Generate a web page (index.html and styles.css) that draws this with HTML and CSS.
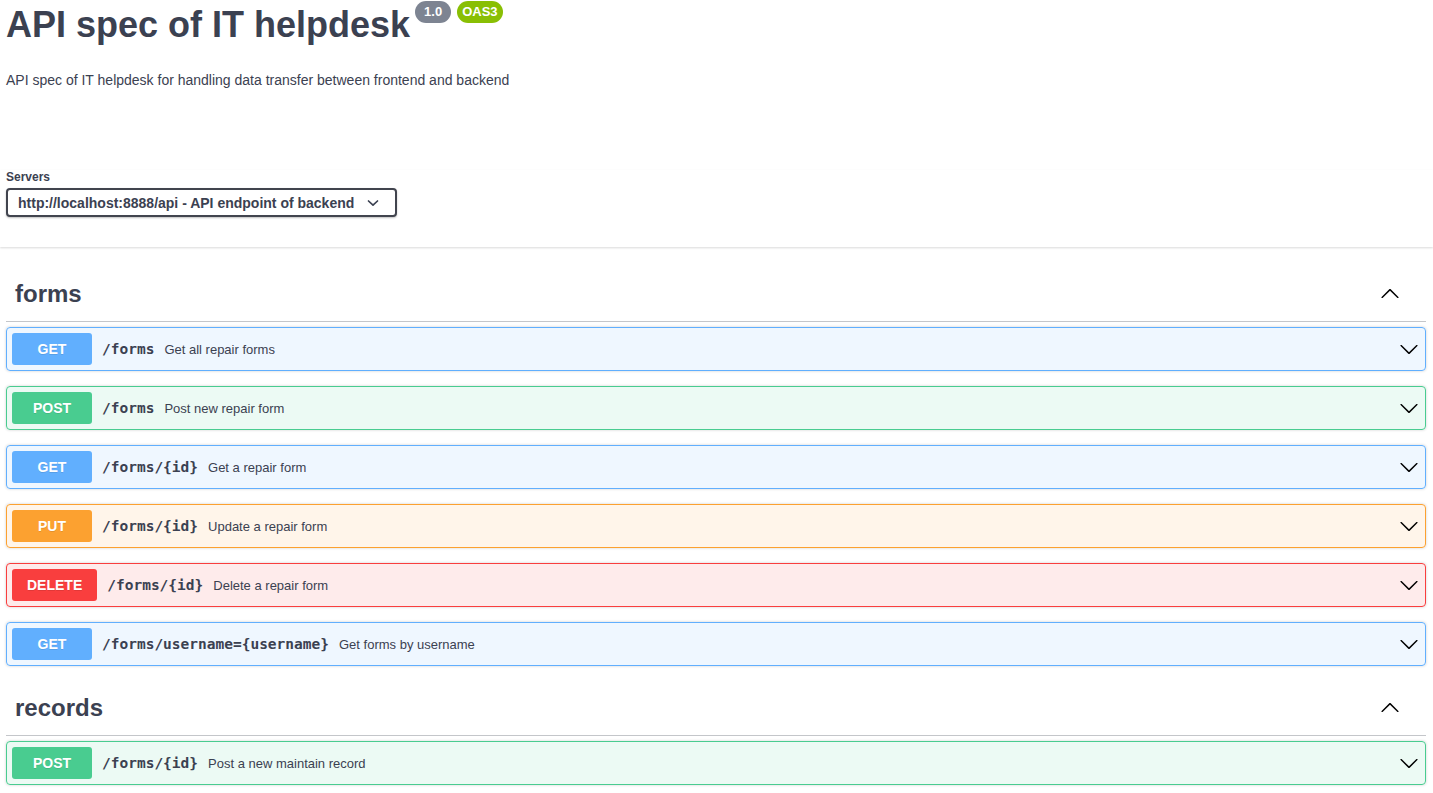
FILE: index.html
```html
<!DOCTYPE html>
<html lang="en">
<head>
<meta charset="utf-8">
<title>API spec of IT helpdesk</title>
<link rel="stylesheet" href="styles.css">
</head>
<body>
<div class="info">
  <h2 class="title">API spec of IT helpdesk<span class="pill pill-version">1.0</span><span class="pill pill-oas">OAS3</span></h2>
  <p class="description">API spec of IT helpdesk for handling data transfer between frontend and backend</p>
</div>
<div class="scheme">
  <div class="servers">
    <label class="servers-label">Servers</label>
    <div class="select">
      <span>http://localhost:8888/api - API endpoint of backend</span>
      <svg class="select-arrow" width="12" height="12" viewBox="0 0 12 12"><polyline points="1.5,4 6,8.2 10.5,4" fill="none" stroke="#3b4151" stroke-width="1.7" stroke-linecap="round" stroke-linejoin="round"/></svg>
    </div>
  </div>
</div>

<div class="ops">
  <section class="tag-section">
    <h3 class="tag">
      <span class="tag-name">forms</span>
      <svg class="arrow" width="20" height="20" viewBox="0 0 20 20"><path transform="rotate(180 10 10)" d="M17.418 6.109c.272-.268.709-.268.979 0s.271.701 0 .969l-7.908 7.83c-.27.268-.707.268-.979 0l-7.908-7.830c-.27-.268-.27-.701 0-.969.271-.268.709-.268.979 0L10 13.25l7.418-7.141z"/></svg>
    </h3>
    <div class="op op-get">
      <span class="method">GET</span>
      <span class="path">/forms</span>
      <span class="desc">Get all repair forms</span>
      <svg class="arrow" width="20" height="20" viewBox="0 0 20 20"><path d="M17.418 6.109c.272-.268.709-.268.979 0s.271.701 0 .969l-7.908 7.83c-.27.268-.707.268-.979 0l-7.908-7.83c-.27-.268-.27-.701 0-.969.271-.268.709-.268.979 0L10 13.25l7.418-7.141z"/></svg>
    </div>
    <div class="op op-post">
      <span class="method">POST</span>
      <span class="path">/forms</span>
      <span class="desc">Post new repair form</span>
      <svg class="arrow" width="20" height="20" viewBox="0 0 20 20"><path d="M17.418 6.109c.272-.268.709-.268.979 0s.271.701 0 .969l-7.908 7.83c-.27.268-.707.268-.979 0l-7.908-7.83c-.27-.268-.27-.701 0-.969.271-.268.709-.268.979 0L10 13.25l7.418-7.141z"/></svg>
    </div>
    <div class="op op-get">
      <span class="method">GET</span>
      <span class="path">/forms/{id}</span>
      <span class="desc">Get a repair form</span>
      <svg class="arrow" width="20" height="20" viewBox="0 0 20 20"><path d="M17.418 6.109c.272-.268.709-.268.979 0s.271.701 0 .969l-7.908 7.83c-.27.268-.707.268-.979 0l-7.908-7.83c-.27-.268-.27-.701 0-.969.271-.268.709-.268.979 0L10 13.25l7.418-7.141z"/></svg>
    </div>
    <div class="op op-put">
      <span class="method">PUT</span>
      <span class="path">/forms/{id}</span>
      <span class="desc">Update a repair form</span>
      <svg class="arrow" width="20" height="20" viewBox="0 0 20 20"><path d="M17.418 6.109c.272-.268.709-.268.979 0s.271.701 0 .969l-7.908 7.83c-.27.268-.707.268-.979 0l-7.908-7.83c-.27-.268-.27-.701 0-.969.271-.268.709-.268.979 0L10 13.25l7.418-7.141z"/></svg>
    </div>
    <div class="op op-delete">
      <span class="method">DELETE</span>
      <span class="path">/forms/{id}</span>
      <span class="desc">Delete a repair form</span>
      <svg class="arrow" width="20" height="20" viewBox="0 0 20 20"><path d="M17.418 6.109c.272-.268.709-.268.979 0s.271.701 0 .969l-7.908 7.83c-.27.268-.707.268-.979 0l-7.908-7.83c-.27-.268-.27-.701 0-.969.271-.268.709-.268.979 0L10 13.25l7.418-7.141z"/></svg>
    </div>
    <div class="op op-get">
      <span class="method">GET</span>
      <span class="path">/forms/username={username}</span>
      <span class="desc">Get forms by username</span>
      <svg class="arrow" width="20" height="20" viewBox="0 0 20 20"><path d="M17.418 6.109c.272-.268.709-.268.979 0s.271.701 0 .969l-7.908 7.83c-.27.268-.707.268-.979 0l-7.908-7.83c-.27-.268-.27-.701 0-.969.271-.268.709-.268.979 0L10 13.25l7.418-7.141z"/></svg>
    </div>
  </section>

  <section class="tag-section">
    <h3 class="tag">
      <span class="tag-name">records</span>
      <svg class="arrow" width="20" height="20" viewBox="0 0 20 20"><path transform="rotate(180 10 10)" d="M17.418 6.109c.272-.268.709-.268.979 0s.271.701 0 .969l-7.908 7.83c-.27.268-.707.268-.979 0l-7.908-7.83c-.27-.268-.27-.701 0-.969.271-.268.709-.268.979 0L10 13.25l7.418-7.141z"/></svg>
    </h3>
    <div class="op op-post">
      <span class="method">POST</span>
      <span class="path">/forms/{id}</span>
      <span class="desc">Post a new maintain record</span>
      <svg class="arrow" width="20" height="20" viewBox="0 0 20 20"><path d="M17.418 6.109c.272-.268.709-.268.979 0s.271.701 0 .969l-7.908 7.83c-.27.268-.707.268-.979 0l-7.908-7.83c-.27-.268-.27-.701 0-.969.271-.268.709-.268.979 0L10 13.25l7.418-7.141z"/></svg>
    </div>
  </section>
</div>
</body>
</html>
```

FILE: styles.css
```css
* { box-sizing: border-box; }

html, body {
  margin: 0;
  padding: 0;
  background: #fff;
}

body {
  font-family: "Liberation Sans", Arial, sans-serif;
  color: #3b4151;
  overflow: hidden;
}

.info {
  padding: 0 6px;
}

.title {
  margin: 0;
  font-size: 36px;
  line-height: 50px;
  font-weight: 700;
  color: #3b4151;
  white-space: nowrap;
}

.pill {
  display: inline-block;
  vertical-align: top;
  margin-top: 1px;
  height: 22px;
  font-size: 13px;
  line-height: 22px;
  font-weight: 700;
  color: #fff;
  border-radius: 12px;
}

.pill-version {
  background: #7d8492;
  margin-left: 5px;
  padding: 0 9px;
}

.pill-oas {
  background: #89bf04;
  margin-left: 6px;
  padding: 0 5px;
}

.description {
  margin: 22px 0 0;
  font-size: 14px;
  line-height: 17px;
}

.scheme {
  margin-top: 81px;
  padding: 0 6px 30px;
  background: #fff;
  box-shadow: 0 1px 2px 0 rgba(0, 0, 0, 0.15);
}

.servers-label {
  display: block;
  font-size: 12px;
  font-weight: 700;
  line-height: 15px;
  margin-bottom: 3px;
}

.select {
  display: inline-flex;
  align-items: center;
  width: 391px;
  height: 29px;
  padding: 0 10px;
  border: 2px solid #41444e;
  border-radius: 4px;
  box-shadow: 0 1px 2px 0 rgba(0, 0, 0, 0.25);
  font-size: 14px;
  font-weight: 700;
  color: #3b4151;
  background: #fff;
}

.select span {
  flex: 1;
  white-space: nowrap;
}

.select-arrow {
  margin-right: 6px;
}

.ops {
  padding: 20px 7px 0 6px;
}

.tag {
  display: flex;
  align-items: center;
  margin: 0 0 5px;
  height: 55px;
  padding: 0 26px 0 9px;
  border-bottom: 1px solid rgba(59, 65, 81, 0.3);
  font-size: 24px;
  font-weight: 700;
  color: #3b4151;
}

.tag-name {
  flex: 1;
}

.arrow {
  flex: none;
  fill: #000;
}

.op {
  display: flex;
  align-items: center;
  height: 44px;
  margin: 0 0 15px;
  padding: 0 6px 0 5px;
  border: 1px solid;
  border-radius: 4px;
  box-shadow: 0 0 3px rgba(0, 0, 0, 0.19);
}

.method {
  flex: none;
  min-width: 80px;
  padding: 6px 15px;
  border-radius: 3px;
  font-size: 14px;
  line-height: 20px;
  font-weight: 700;
  text-align: center;
  color: #fff;
  text-shadow: 0 1px 0 rgba(0, 0, 0, 0.1);
}

.path {
  padding: 0 10px;
  font-family: "DejaVu Sans Mono", "Liberation Mono", monospace;
  font-size: 14.5px;
  font-weight: 700;
  color: #3b4151;
  white-space: nowrap;
}

.desc {
  flex: 1;
  font-size: 13px;
  color: #3b4151;
}

.op-get { background: rgba(97, 175, 254, 0.1); border-color: #61affe; }
.op-get .method { background: #61affe; }

.op-post { background: rgba(73, 204, 144, 0.1); border-color: #49cc90; }
.op-post .method { background: #49cc90; }

.op-put { background: rgba(252, 161, 48, 0.1); border-color: #fca130; }
.op-put .method { background: #fca130; }

.op-delete { background: rgba(249, 62, 62, 0.1); border-color: #f93e3e; }
.op-delete .method { background: #f93e3e; }
```
